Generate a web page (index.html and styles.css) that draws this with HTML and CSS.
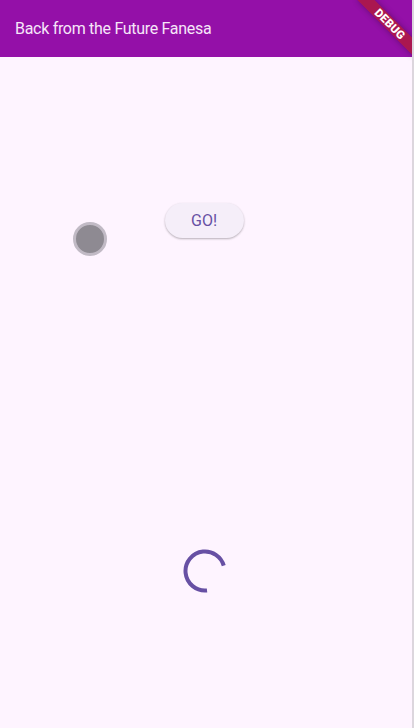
FILE: index.html
```html
<!DOCTYPE html>
<html>
<head>
<meta charset="utf-8">
<link rel="stylesheet" href="styles.css">
</head>
<body>
<div class="screen">
  <header class="appbar">
    <h1 class="title">Back from the Future Fanesa</h1>
  </header>
  <main class="content">
    <div class="ball"></div>
    <div class="button-row">
      <button class="go-btn">GO!</button>
    </div>
    <div class="spinner-row">
      <svg class="spinner" width="44" height="44" viewBox="0 0 44 44">
        <circle cx="22" cy="22" r="19.5" fill="none" stroke="#6750a4" stroke-width="4" stroke-dasharray="87.8 200" transform="rotate(84 22 22)"/>
      </svg>
    </div>
  </main>
  <div class="debug-banner">DEBUG</div>
</div>
</body>
</html>
```

FILE: styles.css
```css
* { box-sizing: border-box; }
html, body {
  margin: 0;
  padding: 0;
  background: #fef4ff;
}
body {
  font-family: Roboto, "Noto Sans", sans-serif;
  width: 414px;
  height: 728px;
  overflow: hidden;
}
.screen {
  position: relative;
  width: 414px;
  height: 728px;
  background: #fef4ff;
  border-right: 2px solid #dcd6dd;
  overflow: hidden;
  display: flex;
  flex-direction: column;
}
.appbar {
  height: 57px;
  background: #9410a8;
  display: flex;
  align-items: center;
  padding: 0 14px 0 15px;
  flex-shrink: 0;
}
.title {
  margin: 0;
  font-size: 16px;
  font-weight: 400;
  color: #f6e6f8;
  letter-spacing: -0.3px;
  line-height: 20px;
}
.content {
  position: relative;
  flex: 1;
  display: flex;
  flex-direction: column;
}
.button-row {
  margin-top: 146px;
  display: flex;
  justify-content: center;
  padding-right: 4px;
}
.go-btn {
  width: 79px;
  height: 35px;
  border: none;
  border-radius: 18px;
  background: #f5eef9;
  color: #6750a4;
  font-family: Roboto, "Noto Sans", sans-serif;
  font-size: 16px;
  font-weight: 400;
  padding: 0;
  box-shadow: 0 1px 2px rgba(0,0,0,0.22), 0 1px 3px rgba(0,0,0,0.08);
}
.ball {
  position: absolute;
  left: 73px;
  top: 165px;
  width: 34px;
  height: 34px;
  border-radius: 50%;
  background: #8e8a92;
  border: 3px solid #c1bac5;
}
.spinner-row {
  margin-top: 311px;
  display: flex;
  justify-content: center;
  padding-right: 2px;
}
.spinner { display: block; }
.debug-banner {
  position: absolute;
  left: 350px;
  top: 18px;
  width: 80px;
  height: 12px;
  transform: rotate(45deg);
  background: rgba(183, 28, 28, 0.63);
  color: #fff;
  font-family: Roboto, "Liberation Sans", sans-serif;
  font-size: 11.5px;
  font-weight: 900;
  line-height: 12px;
  letter-spacing: 0.2px;
  text-align: center;
  box-shadow: 0 0 6px rgba(0,0,0,0.3);
}
```
